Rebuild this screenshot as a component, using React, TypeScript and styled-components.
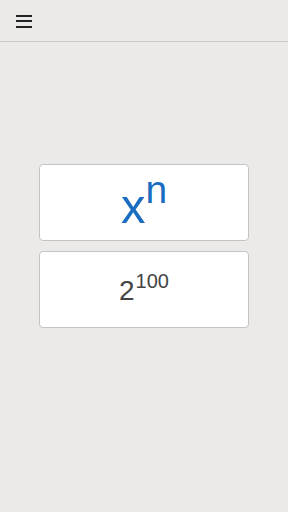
import * as React from "react";
import styled, { createGlobalStyle } from "styled-components";

const GlobalStyle = createGlobalStyle`
  html, body {
    margin: 0;
    padding: 0;
    background: #ebeae8;
    font-family: Arial, "Liberation Sans", sans-serif;
  }
`;

const Page = styled.div`
  min-height: 100vh;
  display: flex;
  flex-direction: column;
`;

const Header = styled.header`
  height: 41px;
  border-bottom: 1px solid #c9c9c8;
  display: flex;
  align-items: center;
  padding-left: 16px;
`;

const MenuButton = styled.button`
  width: 16px;
  height: 13px;
  margin-top: 1px;
  padding: 0;
  border: none;
  background: none;
  display: flex;
  flex-direction: column;
  justify-content: space-between;
  cursor: pointer;
`;

const MenuLine = styled.span`
  display: block;
  height: 2px;
  background: #222;
`;

const Main = styled.main`
  display: flex;
  flex-direction: column;
  align-items: center;
  gap: 10px;
  padding-top: 122px;
`;

const Card = styled.div<{ $pad: number }>`
  box-sizing: border-box;
  width: 210px;
  height: 77px;
  background: #fff;
  border: 1px solid #c4c4c4;
  border-radius: 4px;
  display: flex;
  align-items: flex-end;
  justify-content: center;
  padding-bottom: ${p => p.$pad}px;
`;

const Formula = styled.div<{ $color: string; $size: number }>`
  color: ${p => p.$color};
  font-size: ${p => p.$size}px;
  line-height: 1;
`;

const Sup = styled.span<{ $size: number; $lift: number; $gap: number }>`
  font-size: ${p => p.$size}px;
  vertical-align: ${p => p.$lift}px;
  line-height: 0;
  margin-left: ${p => p.$gap}px;
`;

export default function App() {
  return (
    <Page>
      <GlobalStyle />
      <Header>
        <MenuButton aria-label="menu">
          <MenuLine />
          <MenuLine />
          <MenuLine />
        </MenuButton>
      </Header>
      <Main>
        <Card $pad={9}>
          <Formula $color="#1b6dc1" $size={49}>
            x<Sup $size={39} $lift={20} $gap={0}>n</Sup>
          </Formula>
        </Card>
        <Card $pad={22}>
          <Formula $color="#444" $size={28}>
            2<Sup $size={20} $lift={12} $gap={1}>100</Sup>
          </Formula>
        </Card>
      </Main>
    </Page>
  );
}
